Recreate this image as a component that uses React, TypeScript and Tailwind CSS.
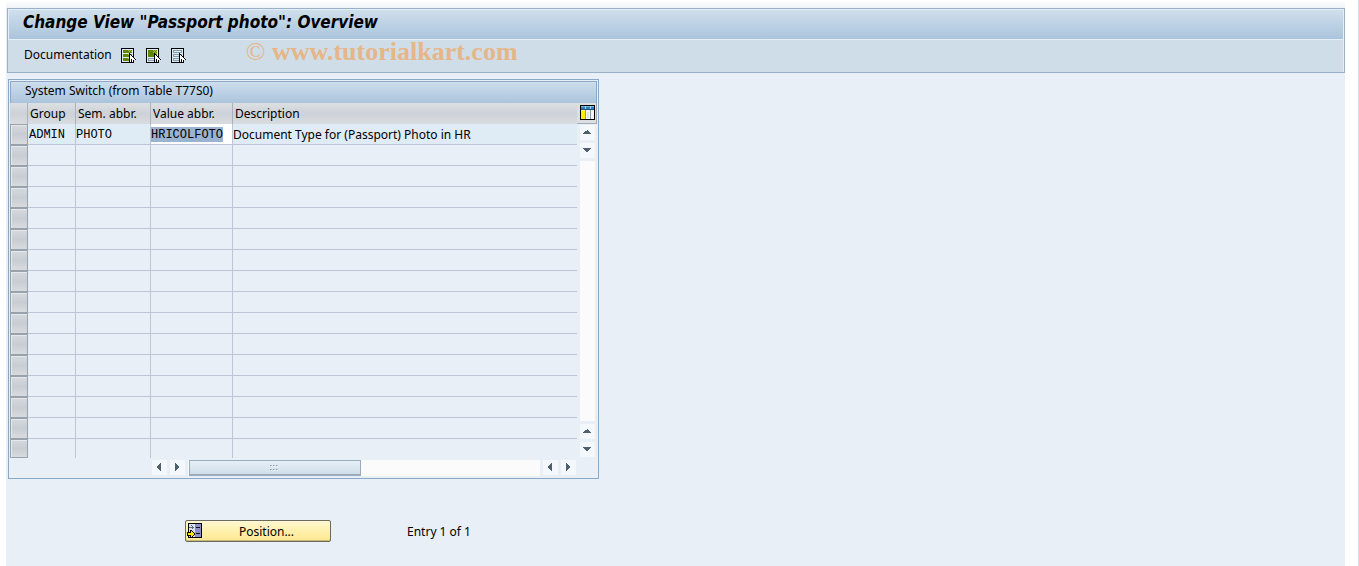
import type { ReactNode } from "react";

interface Entry {
  group: string;
  sem: string;
  value: string;
  description: string;
}

const ENTRIES: Entry[] = [
  {
    group: "ADMIN",
    sem: "PHOTO",
    value: "HRICOLFOTO",
    description: "Document Type for (Passport) Photo in HR",
  },
];

const VISIBLE_ROWS = 16;

function SheetIcon({ children }: { children: ReactNode }) {
  return (
    <svg width="16" height="15" viewBox="0 0 16 15" shapeRendering="crispEdges" aria-hidden="true">
      <rect width="13" height="15" fill="#000" />
      <rect x="1" y="1" width="11" height="13" fill="#e3ebf2" />
      {children}
      <path d="M8 5h1v1h1v1h1v1h1v1h1v1h1v1h1v1h-2v3h-3v-2h-1v1h-1z" fill="#000" />
      <path d="M9 7h1v1h1v1h1v1h1v1h1v1h-3v-1h-1v2h-1zM11 12h1v2h-1z" fill="#fff" />
    </svg>
  );
}

function SelectAllIcon() {
  return (
    <SheetIcon>
      {[2, 6, 10].map((y) => (
        <g key={y}>
          <rect x="2" y={y} width="9" height="3" fill="#5f8700" />
          <path d={`M7 ${y}h1v1h-1zM9 ${y}h1v1h-1zM8 ${y + 1}h1v1h-1zM10 ${y + 1}h1v1h-1z`} fill="#a3c13c" />
        </g>
      ))}
    </SheetIcon>
  );
}

function SelectBlockIcon() {
  return (
    <SheetIcon>
      <rect x="2" y="2" width="9" height="7" fill="#5f8700" />
      <path
        d="M7 2h1v1h-1zM9 2h1v1h-1zM8 3h1v1h-1zM10 3h1v1h-1zM7 4h1v1h-1zM9 4h1v1h-1zM8 5h1v1h-1zM10 5h1v1h-1z"
        fill="#a3c13c"
      />
      <rect x="2" y="10" width="9" height="3" fill="#7f9bae" />
      <rect x="3" y="11" width="7" height="1" fill="#e3ebf2" />
    </SheetIcon>
  );
}

function DeselectAllIcon() {
  return (
    <SheetIcon>
      {[2, 6, 10].map((y) => (
        <g key={y}>
          <rect x="2" y={y} width="9" height="3" fill="#7f9bae" />
          <rect x="3" y={y + 1} width="7" height="1" fill="#e3ebf2" />
        </g>
      ))}
    </SheetIcon>
  );
}

function ColumnsIcon() {
  return (
    <svg width="15" height="15" viewBox="0 0 15 15" shapeRendering="crispEdges" aria-hidden="true">
      <rect width="15" height="15" fill="#000" />
      <rect x="1" y="1" width="13" height="13" fill="#8b98a2" />
      <rect x="1" y="1" width="13" height="3" fill="#2f7fc0" />
      <rect x="1" y="1" width="13" height="1" fill="#6db4e2" />
      <rect x="1" y="4" width="13" height="1" fill="#1b4f7c" />
      <rect x="1" y="5" width="4" height="9" fill="#ffee00" />
      <rect x="1" y="5" width="4" height="1" fill="#fff7a0" />
      <rect x="6" y="5" width="4" height="9" fill="#f5f6f7" />
      <rect x="7" y="7" width="2" height="6" fill="#dde2e6" />
      <rect x="11" y="5" width="3" height="9" fill="#f5f6f7" />
      <path d="M5 1h1v3h-1zM10 1h1v3h-1z" fill="#a9d4ee" />
    </svg>
  );
}

function PositionIcon() {
  return (
    <svg width="16" height="16" viewBox="0 0 16 16" shapeRendering="crispEdges" aria-hidden="true">
      <rect x="1" width="14" height="15" fill="#000" />
      <rect x="2" y="1" width="6" height="13" fill="#dbe3ea" />
      <rect x="8" y="1" width="6" height="13" fill="#8d8fc6" />
      <path d="M9 4h4v1h-4zM9 10h4v1h-4z" fill="#111" />
      <path d="M2 4h5v1h-5zM4 2h1v1h-1zM5 3h1v1h-1zM5 5h1v1h-1z" fill="#5d6d7a" />
      <path d="M0 9h3v-2h2v1h1v1h1v1h1v2h-1v1h-1v1h-1v1h-2v-2h-3z" fill="#000" />
      <path d="M1 10h3v-2h1v1h1v1h1v2h-1v1h-1v1h-1v-2h-3z" fill="#ffe800" />
    </svg>
  );
}

const ARROWS = {
  up: "M7 5h1v1h1v1h1v1h1v1h-8v-1h1v-1h1v-1h2z",
  down: "M3 5h8v1h-1v1h-1v1h-1v1h-2v-1h-1v-1h-1v-1h-1z",
  left: "M8 3h1v8h-1v-1h-1v-1h-1v-1h-1v-2h1v-1h1v-1h1z",
  right: "M5 3h1v1h1v1h1v1h1v2h-1v1h-1v1h-1v1h-1z",
};

function ArrowButton({ dir, label }: { dir: keyof typeof ARROWS; label: string }) {
  return (
    <button type="button" aria-label={label} className="block h-[15px] w-[15px] shrink-0 bg-[#f4f7fb]">
      <svg width="15" height="15" viewBox="0 0 15 15" shapeRendering="crispEdges" aria-hidden="true">
        <path d={ARROWS[dir]} fill="#4d6070" />
      </svg>
    </button>
  );
}

function ToolButton({ label, children }: { label: string; children: ReactNode }) {
  return (
    <button type="button" aria-label={label} className="block">
      {children}
    </button>
  );
}

function HeaderCell({ children }: { children: ReactNode }) {
  return (
    <th className="border-r border-[#a9b3c0] p-0 pl-[2px] text-left font-normal last:border-r-0">{children}</th>
  );
}

function SwitchTable() {
  const rows = Array.from({ length: VISIBLE_ROWS }, (_, i) => ENTRIES[i]);

  return (
    <table className="min-w-0 flex-1 table-fixed border-separate border-spacing-0">
      <colgroup>
        <col className="w-[18px]" />
        <col className="w-[48px]" />
        <col className="w-[75px]" />
        <col className="w-[82px]" />
        <col />
      </colgroup>
      <thead>
        <tr className="h-[21px] bg-linear-to-b from-[#dde0e2] via-[#cdd2d9] to-[#d9dcdf]">
          <th className="border-r border-[#a9b3c0]" aria-label="Select" />
          <HeaderCell>Group</HeaderCell>
          <HeaderCell>Sem. abbr.</HeaderCell>
          <HeaderCell>Value abbr.</HeaderCell>
          <HeaderCell>Description</HeaderCell>
        </tr>
      </thead>
      <tbody>
        {rows.map((row, i) => {
          const last = i === VISIBLE_ROWS - 1;
          const line = last ? "border-[#bcc6d5]" : "border-b border-[#bcc6d5]";
          const fill = row ? "bg-[#dfebf5]" : "";
          const height = last ? "h-[19px]" : "h-[21px]";
          return (
            <tr key={i} className={height}>
              <td className="p-0">
                <button
                  type="button"
                  aria-label={`Select row ${i + 1}`}
                  className={`block w-[18px] border border-[#98a1ac] bg-linear-to-b from-[#d5d9de] via-[#c8cdd4] to-[#d8dbde] shadow-[inset_1px_1px_0_#e6e9ec] ${height}`}
                />
              </td>
              <td className={`border-r p-0 pt-[2px] pl-px font-['Liberation_Mono',monospace] ${line} ${fill}`}>
                {row?.group}
              </td>
              <td className={`border-r p-0 pt-[2px] font-['Liberation_Mono',monospace] ${line} ${fill}`}>{row?.sem}</td>
              <td className={`border-r p-0 ${line} ${row ? "bg-white" : ""}`}>
                {row && (
                  <input
                    aria-label="Value abbr."
                    defaultValue={row.value}
                    className="block h-[15px] w-[72px] bg-[#9ab3d1] p-0 pt-px font-['Liberation_Mono',monospace] text-[12px] outline-none"
                  />
                )}
              </td>
              <td className={`p-0 pt-[2px] whitespace-nowrap ${line} ${fill}`}>{row?.description}</td>
            </tr>
          );
        })}
      </tbody>
    </table>
  );
}

function VerticalScrollbar() {
  return (
    <div className="flex w-5 shrink-0 flex-col">
      <button
        type="button"
        aria-label="Configuration"
        className="flex h-[21px] w-5 items-start justify-end border-r border-b border-[#a3acb6] bg-[#dcdfe2] pt-[2px] pr-px"
      >
        <ColumnsIcon />
      </button>
      <div className="flex flex-1 flex-col items-center gap-[3px] pt-px pb-px">
        <ArrowButton dir="up" label="Scroll up" />
        <ArrowButton dir="down" label="Scroll down" />
        <div className="w-[15px] flex-1 bg-[#fbfbfb]" />
        <ArrowButton dir="up" label="Previous page" />
        <ArrowButton dir="down" label="Next page" />
      </div>
    </div>
  );
}

function HorizontalScrollbar() {
  return (
    <div className="mt-[2px] mr-[21px] mb-px ml-[142px] flex gap-[3px]">
      <ArrowButton dir="left" label="Scroll left" />
      <ArrowButton dir="right" label="Scroll right" />
      <div className="flex h-4 min-w-0 flex-1 bg-[#fbfbfb] pl-px">
        <div className="flex w-[49%] items-center justify-center border border-b-2 border-[#9aabbb] bg-linear-to-b from-[#e6eff7] to-[#cfdfea]">
          <svg width="9" height="8" viewBox="0 0 9 8" shapeRendering="crispEdges" aria-hidden="true">
            {[0, 3, 6].map((x) =>
              [1, 5].map((y) => (
                <g key={`${x}-${y}`}>
                  <rect x={x + 1} y={y} width="1" height="2" fill="#fff" />
                  <rect x={x} y={y} width="1" height="1" fill="#8799aa" />
                  <rect x={x + 1} y={y} width="1" height="1" fill="#b4c2cf" />
                </g>
              ))
            )}
          </svg>
        </div>
      </div>
      <ArrowButton dir="left" label="Page left" />
      <ArrowButton dir="right" label="Page right" />
    </div>
  );
}

export default function App() {
  return (
    <div className="flex min-h-screen border-r border-[#d9dfe8] bg-white pr-[13px] pl-[6px] font-['Noto_Sans','DejaVu_Sans',sans-serif] text-[12px] leading-4 text-black">
      <div className="min-w-0 flex-1 bg-[#e8eff6]">
        <div className="h-2 bg-linear-to-b from-white to-[#eff3f8]" />
        <header className="ml-px border border-[#9ab0c6] bg-[#cfdde8]">
          <div className="h-[30px] border border-b-0 border-[#e4eef7] bg-linear-to-b from-[#cfdfec] to-[#abc4dc] pl-[14px]">
            <h1 className="font-['DejaVu_Sans_Condensed','DejaVu_Sans',sans-serif] text-[17px] leading-6 font-bold italic">
              Change View "Passport photo": Overview
            </h1>
          </div>
          <div className="flex h-[33px] items-center border-t border-r border-[#e4eef7] pb-[2px] pl-4">
            <button type="button">Documentation</button>
            <div className="flex gap-[9px] pl-[9px]">
              <ToolButton label="Select all">
                <SelectAllIcon />
              </ToolButton>
              <ToolButton label="Select block">
                <SelectBlockIcon />
              </ToolButton>
              <ToolButton label="Deselect all">
                <DeselectAllIcon />
              </ToolButton>
            </div>
            <p className="pb-[6px] pl-[59px] font-['Liberation_Serif',serif] text-[26px] leading-6 whitespace-nowrap text-[#e5b688]">
              © <span className="font-bold">www.tutorialkart.com</span>
            </p>
          </div>
        </header>

        <main className="pl-[2px]">
          <section className="mt-[6px] w-full max-w-[591px] border border-[#8ba9c6] p-px">
            <h2 className="h-[22px] border border-b-0 border-[#8ba9c6] bg-linear-to-b from-[#cddeec] to-[#abc4dc] pl-[14px] leading-[18px]">
              System Switch (from Table T77S0)
            </h2>
            <div className="flex">
              <SwitchTable />
              <VerticalScrollbar />
            </div>
            <HorizontalScrollbar />
          </section>

          <div className="mt-[41px] flex items-center pl-[177px]">
            <button
              type="button"
              className="flex h-[22px] w-[146px] items-center rounded-[2px] border border-[#6b6a62] bg-linear-to-b from-[#fff8d2] via-[#fff0ac] to-[#fde992] pl-px shadow-[inset_0_-1px_0_#c9b870]"
            >
              <PositionIcon />
              <span className="flex-1 pt-px">Position...</span>
            </button>
            <p className="pt-[2px] pl-[76px]">Entry 1 of 1</p>
          </div>
        </main>
      </div>
    </div>
  );
}
